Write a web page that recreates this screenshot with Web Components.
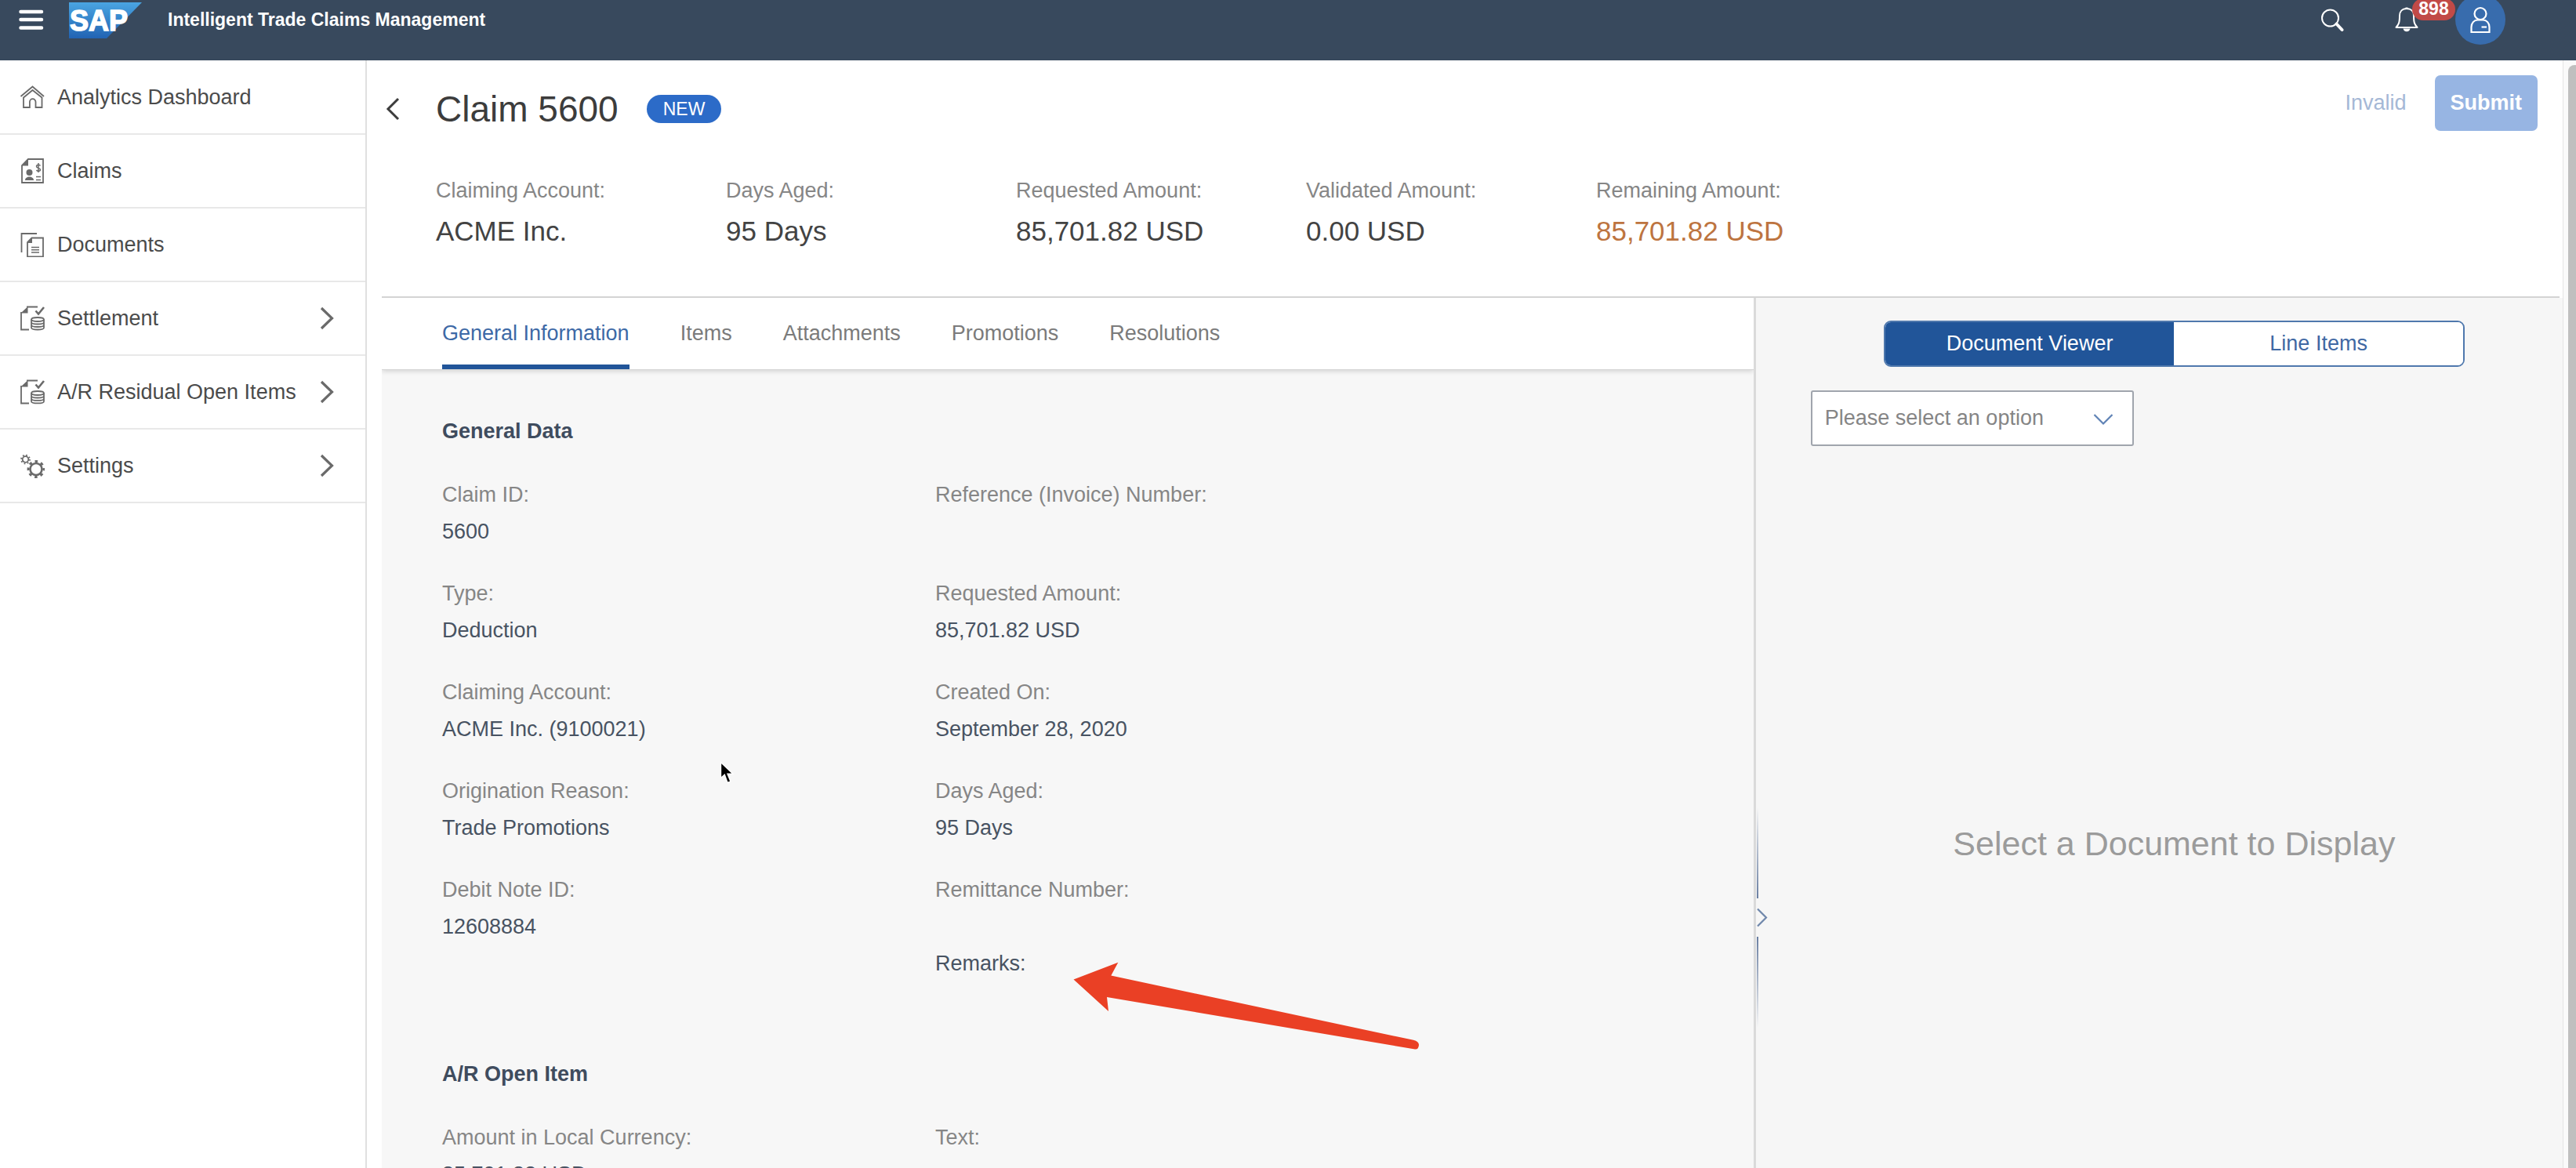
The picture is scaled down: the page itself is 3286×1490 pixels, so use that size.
<!DOCTYPE html>
<html lang="en">
<head>
<meta charset="utf-8">
<title>Intelligent Trade Claims Management</title>
<style>
  html, body { height: 100%; }
  body {
    margin: 0; overflow: hidden; background: #fff; color: #4a4a4a;
    font: 27px/47px "Liberation Sans", Arial, sans-serif;
    --navy: #38495d; --blue: #215599; --label: #868686; --value: #485362; --panel: #f7f7f7; --rule: #e4e4e4;
  }
</style>
</head>
<body>
<claims-app></claims-app>

<script>
const define = (name, html) => customElements.define(name, class extends HTMLElement {
  constructor() {
    super();
    const t = document.createElement('template');
    t.innerHTML = html;
    this.attachShadow({ mode: 'open' }).append(t.content.cloneNode(true));
  }
});

const ICONS = {
  home: `<path d="M1.5 15 16.5 2.5 31 15"/><path d="M5 16.5 16.5 7 28.5 16.5V29H20.5V22a3.8 3.8 0 0 0-7.6 0V29H5Z"/>`,
  claims: `<path d="M11 1H30V31H3V9Z"/><path class="f" d="M11 0V9.5H2.5Z"/><circle class="f" cx="12.5" cy="18" r="4"/><path class="f" d="M7 28c0-6 11-6 11 0Z"/><path d="M26.500 9.500c-1-2-5-1.500-5 .8 0 2.600 5 1.600 5 4.200 0 2.300-4 2.500-5 .4M24 6v12M21 23.500h6M21 27.500h6" stroke-width="1.500"/>`,
  documents: `<path d="M2.500 26V2H22"/><path d="M15.500 7.500H30V31.500H10V13Z"/><path class="f" d="M16 7V14H9.500Z"/><path d="M15 19.500H25M15 22.800H25M15 26H25" stroke-width="1.400"/>`,
  settlement: `<path d="M9 1.500H23M2 8V30.500H12"/><path class="f" d="M10.500 1V9.500H1.500Z"/><path d="M20.500 6.500 24 10.500 31 2" stroke-width="2.600"/><ellipse cx="23" cy="17.500" rx="8" ry="2.500"/><path d="M15 17.500V28c0 3.300 16 3.300 16 0V17.500M15 21c0 3.300 16 3.300 16 0M15 24.500c0 3.300 16 3.300 16 0"/>`,
  settings: `<circle cx="7.500" cy="8" r="3.800"/><circle cx="7.500" cy="8" r="5.400" stroke-width="2" stroke-dasharray="1.700 2.540"/><circle cx="21" cy="20.500" r="7.500" stroke-width="2.600"/><circle cx="21" cy="20.500" r="9.900" stroke-width="3" stroke-dasharray="3.600 4.175" stroke-dashoffset="1.800"/>`
};

define('shell-bar', `
<style>
  :host { display: block; background: var(--navy); color: #fff; }
  header { display: flex; align-items: center; height: 50px; padding: 0 90px 27px 24px; }
  button { border: 0; background: none; padding: 0; color: inherit; font: inherit; display: flex; position: relative; cursor: pointer; }
  svg { display: block; }
  .logo { margin: 2px 33px 0 32px; }
  h1 { margin: 0; font-size: 23px; line-height: 32px; flex: 1; }
  .bell { margin: 0 47px 0 65px; }
  .badge { position: absolute; left: 22px; top: -10px; height: 28px; min-width: 39px; padding: 0 8px; border-radius: 14px; background: #c14a47; font-weight: bold; font-size: 23px; line-height: 26px; text-align: center; z-index: 1; }
  .avatar { width: 64px; height: 64px; border-radius: 50%; background: #386cad; align-items: center; justify-content: center; }
</style>
<header>
  <button aria-label="Menu"><svg width="32" height="28" viewBox="0 0 32 28" stroke="#fff" stroke-width="4.500" stroke-linecap="round"><path d="M2.500 4H29M2.500 14H29M2.500 24.500H29"/></svg></button>
  <svg class="logo" width="93" height="46" viewBox="0 0 93 46" role="img">
    <defs><linearGradient id="g" x1="0" y1="0" x2="0" y2="1"><stop offset="0" stop-color="#4aa5e2"/><stop offset="1" stop-color="#2163b3"/></linearGradient></defs>
    <path d="M0 0H93L48 46H0Z" fill="url(#g)"/>
    <text x="1" y="36" font-family="Liberation Sans, Arial, sans-serif" font-weight="bold" font-size="36" fill="#fff" stroke="#fff" stroke-width="1.500">SAP</text>
  </svg>
  <h1>Intelligent Trade Claims Management</h1>
  <button aria-label="Search"><svg width="30" height="32" viewBox="0 0 30 32" fill="none" stroke="#fff"><circle cx="12.500" cy="14" r="10.500" stroke-width="2"/><path d="M20.500 21.500 27.500 29" stroke-width="4" stroke-linecap="round"/></svg></button>
  <button class="bell" aria-label="Notifications"><svg width="30" height="34" viewBox="0 0 30 34" fill="none" stroke="#fff" stroke-width="2" stroke-linejoin="round"><path d="M15 3c-6 0-9 4-9 9 0 9-1 11-4.500 15H28.500C25 23 24 21 24 12c0-5-3-9-9-9Z"/><path d="M13.500 2.500h3"/><path d="M10.500 28.500a4.600 4.600 0 0 0 9 0Z" fill="#fff" stroke="none"/></svg><span class="badge">898</span></button>
  <button class="avatar" aria-label="Profile"><svg width="28" height="36" viewBox="0 0 28 36" fill="none" stroke="#fff" stroke-width="2.200"><circle cx="14" cy="10.500" r="7.500"/><path d="M2.500 34V27.500c0-5 3.500-9 8-9h7c4.500 0 8 4 8 9V34Z"/><path d="M15.500 27.500h6.500"/></svg></button>
</header>`);

customElements.define('nav-item', class extends HTMLElement {
  connectedCallback() {
    const more = this.hasAttribute('expandable')
      ? '<svg class="more" width="18" height="32" viewBox="0 0 18 32"><path d="M2 3 15.500 16 2 29" stroke-width="3.200"/></svg>' : '';
    this.attachShadow({ mode: 'open' }).innerHTML = `
    <style>
      :host { display: block; border-bottom: 2px solid #e8e8e8; }
      a { display: flex; align-items: center; gap: 16px; height: 92px; padding: 0 40px 0 25px; color: #4b4b4b; text-decoration: none; }
      span { flex: 1; white-space: nowrap; }
      svg { fill: none; stroke: #6a6a6a; stroke-width: 1.800; flex: none; }
      .f { fill: #6a6a6a; stroke: none; }
    </style>
    <a href="#"><svg width="32" height="32" viewBox="0 0 32 32">${ICONS[this.getAttribute('icon')]}</svg><span><slot></slot></span>${more}</a>`;
  }
});

define('side-nav', `
<style>
  :host { display: block; width: 466px; flex: none; border-right: 2px solid #e0e0e0; background: #fff; }
  nav { padding-top: 1px; }
</style>
<nav>
  <nav-item icon="home">Analytics Dashboard</nav-item>
  <nav-item icon="claims">Claims</nav-item>
  <nav-item icon="documents">Documents</nav-item>
  <nav-item icon="settlement" expandable>Settlement</nav-item>
  <nav-item icon="settlement" expandable>A/R Residual Open Items</nav-item>
  <nav-item icon="settings" expandable>Settings</nav-item>
</nav>`);

define('header-facet', `
<style>
  :host { display: block; width: 370px; }
  .label { color: var(--label); line-height: 46px; }
  .value { font-size: 35px; line-height: 58px; color: var(--facet, #434343); }
</style>
<div class="label"><slot name="label"></slot></div>
<div class="value"><slot></slot></div>`);

define('claim-header', `
<style>
  :host { display: flex; justify-content: space-between; align-items: flex-start; margin-right: 4px; padding: 19px 28px 54px 0; border-bottom: 2px solid #d4d4d4; }
  .main { padding-top: 13px; }
  .title { display: flex; align-items: center; height: 60px; margin-bottom: 51px; }
  h2 { margin: 0 36px 0 0; font-size: 46px; line-height: 60px; font-weight: normal; color: #3c3c3c; }
  button { border: 0; background: none; padding: 0; font: inherit; }
  .back { width: 69px; padding-left: 5px; display: flex; }
  .status { background: #2c6bc8; color: #fff; font-size: 23px; line-height: 36px; border-radius: 18px; padding: 0 21px; }
  .facets { display: flex; padding-left: 69px; }
  .actions { display: flex; gap: 16px; }
  .actions button { height: 71px; padding: 0 20px; border-radius: 7px; }
  .ghost { color: #a5b8d6; }
  .actions .submit { background: #97b5e3; color: #fff; font-weight: bold; }
</style>
<div class="main">
  <div class="title">
    <button class="back" aria-label="Back"><svg width="18" height="32" viewBox="0 0 18 32" fill="none" stroke="#3c3c3c" stroke-width="3"><path d="M16 3 3 16 16 29"/></svg></button>
    <h2>Claim 5600</h2><span class="status">NEW</span>
  </div>
  <div class="facets">
    <header-facet><span slot="label">Claiming Account:</span>ACME Inc.</header-facet>
    <header-facet><span slot="label">Days Aged:</span>95 Days</header-facet>
    <header-facet><span slot="label">Requested Amount:</span>85,701.82 USD</header-facet>
    <header-facet><span slot="label">Validated Amount:</span>0.00 USD</header-facet>
    <header-facet style="--facet:#bd7440"><span slot="label">Remaining Amount:</span>85,701.82 USD</header-facet>
  </div>
</div>
<div class="actions"><button class="ghost" disabled>Invalid</button><button class="submit" disabled>Submit</button></div>`);

define('tab-strip', `
<style>
  :host { display: block; position: relative; background: #fff; border-bottom: 1px solid #d6d6d6; box-shadow: 0 2px 6px rgba(0,0,0,.14); }
  div { display: flex; gap: 65px; padding-left: 77px; }
  button { border: 0; border-top: 6px solid transparent; border-bottom: 6px solid transparent; background: none; padding: 0; font: inherit; line-height: 79px; color: #7b7b7b; }
  button[aria-selected=true] { color: #3d69a6; border-bottom-color: var(--blue); }
</style>
<div role="tablist">
  <button role="tab" aria-selected="true">General Information</button>
  <button role="tab">Items</button>
  <button role="tab">Attachments</button>
  <button role="tab">Promotions</button>
  <button role="tab">Resolutions</button>
</div>`);

define('data-field', `
<style>
  :host { display: block; }
  .label { color: var(--label); }
  .value { color: var(--value); min-height: 47px; }
</style>
<div class="label"><slot name="label"></slot></div>
<div class="value"><slot></slot></div>`);

define('form-group', `
<style>
  :host { display: block; color: var(--value); }
  .title { line-height: 47px; margin-bottom: 34px; color: #3f4c5e; }
  .cols { display: grid; grid-template-columns: 629px 1fr; }
  .col { display: flex; flex-direction: column; gap: 32px; }
  ::slotted(h3) { margin: 0; font-size: 27px; font-weight: bold; }
</style>
<div class="title"><slot name="title"></slot></div>
<div class="cols"><div class="col"><slot name="left"></slot></div><div><div class="col"><slot name="right"></slot></div><slot name="note"></slot></div></div>`);

define('general-info', `
<style>
  :host { display: flex; flex-direction: column; gap: 94px; padding: 55px 0 0 77px; }
</style>
<form-group>
  <h3 slot="title">General Data</h3>
  <data-field slot="left"><span slot="label">Claim ID:</span>5600</data-field>
  <data-field slot="left"><span slot="label">Type:</span>Deduction</data-field>
  <data-field slot="left"><span slot="label">Claiming Account:</span>ACME Inc. (9100021)</data-field>
  <data-field slot="left"><span slot="label">Origination Reason:</span>Trade Promotions</data-field>
  <data-field slot="left"><span slot="label">Debit Note ID:</span>12608884</data-field>
  <data-field slot="right"><span slot="label">Reference (Invoice) Number:</span></data-field>
  <data-field slot="right"><span slot="label">Requested Amount:</span>85,701.82 USD</data-field>
  <data-field slot="right"><span slot="label">Created On:</span>September 28, 2020</data-field>
  <data-field slot="right"><span slot="label">Days Aged:</span>95 Days</data-field>
  <data-field slot="right"><span slot="label">Remittance Number:</span></data-field>
  <div slot="note">Remarks:</div>
</form-group>
<form-group>
  <h3 slot="title">A/R Open Item</h3>
  <data-field slot="left"><span slot="label">Amount in Local Currency:</span>85,701.82 USD</data-field>
  <data-field slot="right"><span slot="label">Text:</span></data-field>
</form-group>`);

define('split-bar', `
<style>
  :host { display: block; position: relative; background: #dadada; }
  .grip { position: absolute; left: 4px; top: 650px; display: flex; flex-direction: column; align-items: flex-start; gap: 12px; }
  i { width: 2px; height: 116px; background: linear-gradient(rgba(84,112,155,0), #6a7fa2); }
  i:last-child { transform: scaleY(-1); }
  svg { display: block; }
</style>
<div class="grip"><i></i><svg width="14" height="25" viewBox="0 0 14 25" fill="none" stroke="#6f87ab" stroke-width="2.200"><path d="M1 1.500 12 12.500 1 23.500"/></svg><i></i></div>`);

define('document-panel', `
<style>
  :host { display: block; padding: 29px 32px 0 70px; background: #f6f6f6; }
  .seg { display: grid; grid-template-columns: 1fr 1fr; width: 741px; height: 59px; margin: 0 auto; box-sizing: border-box; border: 2px solid #4f78ad; border-radius: 9px; overflow: hidden; background: #fff; }
  .seg button { border: 0; background: #fff; color: #3f68a3; font: inherit; padding: 0; }
  .seg button[aria-pressed=true] { background: var(--blue); color: #fff; }
  .pick { position: relative; width: 412px; margin-top: 30px; }
  select { appearance: none; display: block; width: 100%; height: 71px; box-sizing: border-box; border: 2px solid #a0a5ad; border-radius: 3px; background: #fff; color: #858585; font: inherit; padding: 0 60px 0 16px; }
  svg { position: absolute; right: 26px; top: 29px; pointer-events: none; }
  p { margin: 477px 0 0; font-size: 43px; line-height: 60px; text-align: center; color: #9b9b9b; }
</style>
<div class="seg"><button aria-pressed="true">Document Viewer</button><button aria-pressed="false">Line Items</button></div>
<div class="pick"><select aria-label="Document"><option>Please select an option</option></select><svg width="26" height="16" viewBox="0 0 26 16" fill="none" stroke="#5f82b5" stroke-width="2.200"><path d="M1.500 2 13 13.500 24.500 2"/></svg></div>
<p>Select a Document to Display</p>`);

define('claims-app', `
<style>
  :host { display: flex; flex-direction: column; height: 100vh; overflow: hidden; position: relative; }
  .body { flex: 1; min-height: 0; display: flex; }
  main { flex: 1; min-width: 0; display: flex; flex-direction: column; padding-left: 19px; overflow: hidden; }
  .split { flex: 1; min-height: 0; display: grid; grid-template-columns: 17fr 3px 10fr; }
  .form { background: var(--panel); overflow: hidden; }
  .scroll { width: 10px; flex: none; padding: 6px 0 0 6px; background: #fafafa; border-left: 1px solid #e4e4e4; }
  .thumb { height: 100%; background: #bfbfbf; border-radius: 8px 0 0 0; }
  .arrow, .cursor { position: absolute; pointer-events: none; }
  .arrow { left: 1340px; top: 1190px; }
  .cursor { left: 916px; top: 970px; }
</style>
<shell-bar></shell-bar>
<div class="body">
  <side-nav></side-nav>
  <main>
    <claim-header></claim-header>
    <div class="split">
      <div class="form"><tab-strip></tab-strip><general-info></general-info></div>
      <split-bar></split-bar>
      <document-panel></document-panel>
    </div>
  </main>
  <div class="scroll"><div class="thumb"></div></div>
</div>
<svg class="arrow" width="500" height="200" viewBox="0 0 500 200" fill="#ea4025"><path d="M29.500 59.500 86.300 37.700 77.300 54.500 463 136.800Q470 138.500 470 143 469.500 149 465 148.500L72 82 74 100Z"/></svg>
<svg class="cursor" width="24" height="34" viewBox="0 0 24 34"><path d="M3.500 2.500V22.500L8.300 18.200 12 28.500 16 27 12 17.300H19Z" fill="#000" stroke="#fff" stroke-width="1.400"/></svg>`);
</script>
</body>
</html>
